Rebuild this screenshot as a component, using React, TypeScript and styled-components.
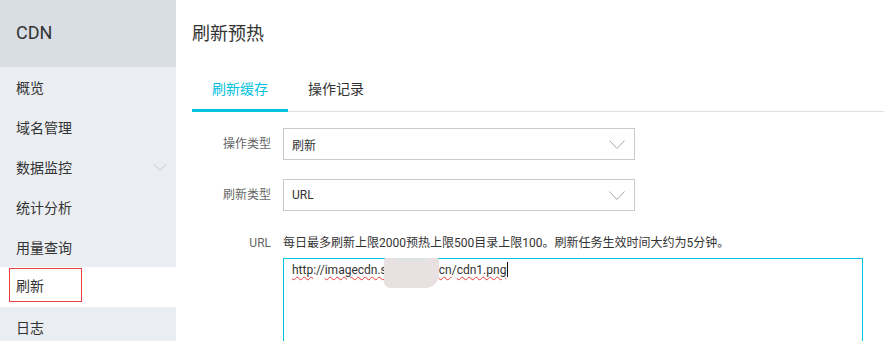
import React from 'react';
import styled, { createGlobalStyle } from 'styled-components';

const GlobalStyle = createGlobalStyle`
  html, body {
    margin: 0;
    padding: 0;
    background: #fff;
  }
  body {
    font-family: Roboto, "Noto Sans CJK SC", "Liberation Sans", sans-serif;
    color: #333;
  }
`;

const Page = styled.div`
  display: flex;
  height: 100vh;
  overflow: hidden;
`;

const Sidebar = styled.aside`
  width: 176px;
  flex-shrink: 0;
  display: flex;
  flex-direction: column;
  background: #eaedf1;
`;

const Brand = styled.div`
  height: 67px;
  flex-shrink: 0;
  box-sizing: border-box;
  padding: 0 0 3px 16px;
  display: flex;
  align-items: center;
  background: #d9dee4;
  font-size: 18px;
  color: #333;
`;

const MenuItem = styled.div<{ $active?: boolean }>`
  height: 40px;
  flex-shrink: 0;
  box-sizing: border-box;
  display: flex;
  align-items: ${(p) => (p.$active ? 'flex-start' : 'center')};
  justify-content: space-between;
  padding: 0 10px 0 ${(p) => (p.$active ? '9px' : '16px')};
  background: ${(p) => (p.$active ? '#fff' : 'transparent')};
  font-size: 14px;
  color: #333;
`;

const Marked = styled.span`
  width: 73px;
  height: 34px;
  margin-top: 1px;
  box-sizing: border-box;
  padding-left: 6px;
  display: flex;
  align-items: center;
  border: 1px solid #e8413f;
`;

const Main = styled.main`
  flex: 1;
  min-width: 0;
  padding-left: 16px;
  display: flex;
  flex-direction: column;
  overflow: hidden;

  & > * {
    flex-shrink: 0;
  }
`;

const Title = styled.h1`
  margin: 0;
  height: 67px;
  box-sizing: border-box;
  padding-bottom: 3px;
  display: flex;
  align-items: center;
  font-size: 18px;
  font-weight: normal;
  color: #333;
`;

const TabBar = styled.div`
  display: flex;
  height: 45px;
  box-sizing: border-box;
  border-bottom: 1px solid #e1e1e1;
`;

const Tab = styled.div<{ $active?: boolean }>`
  height: 45px;
  margin-bottom: -1px;
  box-sizing: border-box;
  padding: 0 20px;
  display: flex;
  align-items: center;
  font-size: 14px;
  color: ${(p) => (p.$active ? '#00c1de' : '#333')};
  border-bottom: 3px solid ${(p) => (p.$active ? '#00c1de' : 'transparent')};
`;

const Form = styled.div`
  display: flex;
  flex-direction: column;
  padding-top: 16px;
`;

const Row = styled.div<{ $gap: number; $top?: boolean }>`
  display: flex;
  align-items: ${(p) => (p.$top ? 'flex-start' : 'center')};
  gap: 12px;
  margin-top: ${(p) => p.$gap}px;
`;

const Label = styled.label<{ $flush?: boolean }>`
  width: 79px;
  flex-shrink: 0;
  text-align: right;
  font-size: 12px;
  line-height: 18px;
  color: #666;
  margin-top: ${(p) => (p.$flush ? '0' : '-1px')};
`;

const Select = styled.div`
  width: 352px;
  height: 32px;
  box-sizing: border-box;
  padding: 0 9px 0 8px;
  display: flex;
  align-items: center;
  justify-content: space-between;
  border: 1px solid #c9c9c9;
  font-size: 12px;
  color: #333;
`;

const Field = styled.div`
  display: flex;
  flex-direction: column;
  gap: 6px;
`;

const Hint = styled.div`
  font-size: 12px;
  line-height: 18px;
  color: #333;
`;

const TextArea = styled.div`
  width: 580px;
  height: 130px;
  box-sizing: border-box;
  padding: 3px 8px;
  border: 1px solid #00c1de;
  font-size: 12px;
  line-height: 16px;
  color: #333;
  white-space: nowrap;
`;

const Spell = styled.span`
  text-decoration: underline wavy #e53935;
  text-decoration-thickness: 1px;
  text-underline-offset: 2px;
`;

const Smudge = styled.span`
  display: inline-block;
  vertical-align: top;
  width: 55px;
  height: 30px;
  margin: -4px 0 -10px -3px;
  background: linear-gradient(
    to right,
    #e8e0e1 0 13px,
    transparent 13px 42px,
    #e8e0e1 42px
  ),
  linear-gradient(to bottom, #dfe3e3 0 4px, #e8e0e1 4px);
  border-radius: 2px 2px 14px 6px;
`;

const Caret = styled.span`
  display: inline-block;
  width: 1px;
  height: 15px;
  margin-left: 1px;
  vertical-align: -3px;
  background: #111;
`;

const Chevron: React.FC<{ w: number; h: number; color: string }> = ({ w, h, color }) => (
  <svg width={w} height={h} viewBox={`0 0 ${w} ${h}`}>
    <polyline
      points={`0.5,0.5 ${w / 2},${h - 0.5} ${w - 0.5},0.5`}
      fill="none"
      stroke={color}
      strokeWidth="1"
    />
  </svg>
);

const menu = ['概览', '域名管理', '数据监控', '统计分析', '用量查询', '刷新', '日志'];

const App: React.FC = () => {
  return (
    <Page>
      <GlobalStyle />
      <Sidebar>
        <Brand>CDN</Brand>
        {menu.map((item) =>
          item === '刷新' ? (
            <MenuItem key={item} $active>
              <Marked>{item}</Marked>
            </MenuItem>
          ) : (
            <MenuItem key={item}>
              <span>{item}</span>
              {item === '数据监控' && <Chevron w={12} h={7} color="#c5c9cf" />}
            </MenuItem>
          )
        )}
      </Sidebar>
      <Main>
        <Title>刷新预热</Title>
        <TabBar>
          <Tab $active>刷新缓存</Tab>
          <Tab>操作记录</Tab>
        </TabBar>
        <Form>
          <Row $gap={0}>
            <Label>操作类型</Label>
            <Select>
              <span>刷新</span>
              <Chevron w={16} h={9} color="#a8a8a8" />
            </Select>
          </Row>
          <Row $gap={19}>
            <Label>刷新类型</Label>
            <Select>
              <span>URL</span>
              <Chevron w={16} h={9} color="#a8a8a8" />
            </Select>
          </Row>
          <Row $gap={23} $top>
            <Label $flush>URL</Label>
            <Field>
              <Hint>每日最多刷新上限2000预热上限500目录上限100。刷新任务生效时间大约为5分钟。</Hint>
              <TextArea>
                <Spell>http</Spell>://<Spell>imagecdn.s</Spell>
                <Smudge />
                <Spell>cn</Spell>/<Spell>cdn1.png</Spell>
                <Caret />
              </TextArea>
            </Field>
          </Row>
        </Form>
      </Main>
    </Page>
  );
};

export default App;
